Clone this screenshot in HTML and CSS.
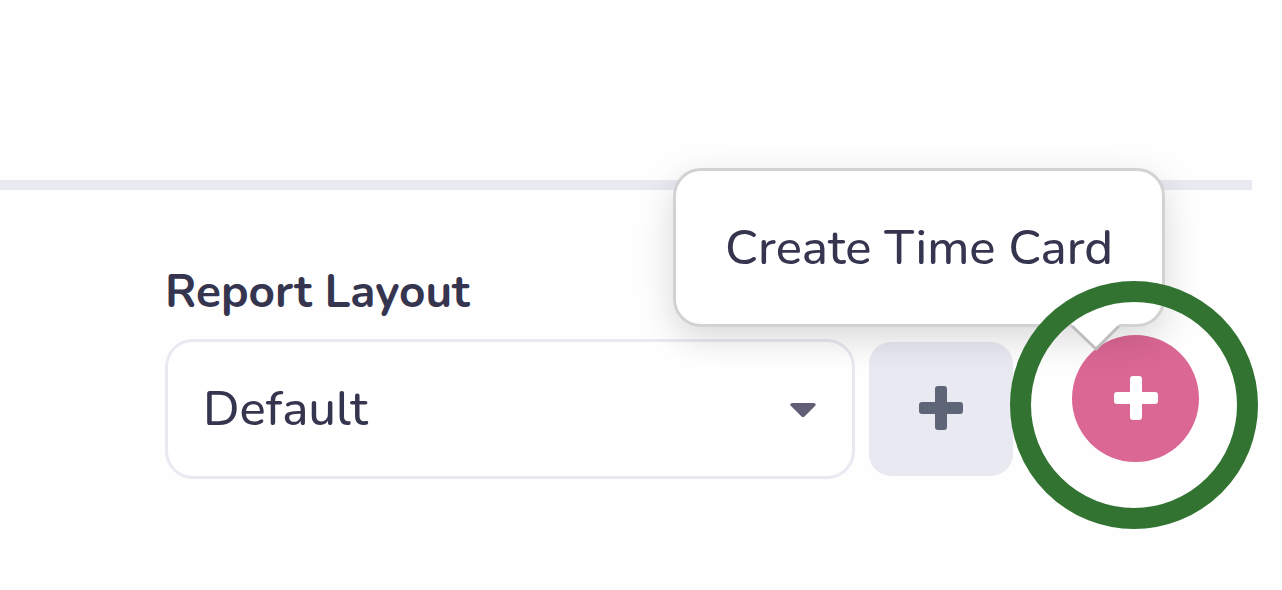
FILE: index.html
```html
<!DOCTYPE html>
<html lang="en">
<head>
<meta charset="utf-8">
<meta name="viewport" content="width=device-width, initial-scale=1">
<title>Report Layout</title>
<link rel="stylesheet" href="styles.css">
</head>
<body>
<main class="panel">
  <hr class="divider">
  <form class="report">
    <label class="report-label" for="layout">Report Layout</label>
    <div class="toolbar">
      <div class="select-box">
        <select class="select" id="layout">
          <option>Default</option>
        </select>
        <svg class="caret" viewBox="0 0 26 16" aria-hidden="true"><path d="M2 1H24Q27 2 25 4L14.500 14.500Q13 16 11.500 14.500L1 4Q-1 2 2 1Z"/></svg>
      </div>
      <button class="add-layout" type="button" aria-label="Add layout">
        <svg class="plus" viewBox="0 0 44 44" aria-hidden="true"><path d="M19 0H25Q28 0 28 3V16H41Q44 16 44 19V25Q44 28 41 28H28V41Q28 44 25 44H19Q16 44 16 41V28H3Q0 28 0 25V19Q0 16 3 16H16V3Q16 0 19 0Z"/></svg>
      </button>
      <div class="create">
        <button class="create-button" type="button" aria-describedby="create-tip" aria-label="Create">
          <svg class="plus" viewBox="0 0 44 44" aria-hidden="true"><path d="M19 0H25Q28 0 28 3V16H41Q44 16 44 19V25Q44 28 41 28H28V41Q28 44 25 44H19Q16 44 16 41V28H3Q0 28 0 25V19Q0 16 3 16H16V3Q16 0 19 0Z"/></svg>
        </button>
        <div class="tooltip" id="create-tip" role="tooltip">Create Time Card
          <svg class="tooltip-arrow" viewBox="0 0 50 28" aria-hidden="true"><path class="arrow-fill" d="M1 0H48V2L25 25L1 2Z"/><path class="arrow-line" d="M1 2L25 25L48 2"/></svg>
        </div>
        <span class="highlight-ring"></span>
      </div>
    </div>
  </form>
</main>
</body>
</html>
```
FILE: styles.css
```css
* {
  box-sizing: border-box;
}

body {
  margin: 0;
  background: #fefefe;
  color: #36354f;
  font-family: Nunito, Lato, "Open Sans", sans-serif;
}

.panel {
  min-height: 100vh;
  padding: 180px 0 48px;
}

.divider {
  height: 10px;
  margin: 0 30px 0 0;
  border: 0;
  background: #e9e9f2;
}

.report {
  padding: 74px 83px 0 165px;
}

.report-label {
  display: block;
  margin-bottom: 15px;
  font-size: 46px;
  font-weight: 700;
  line-height: 56px;
}

.toolbar {
  display: flex;
  align-items: center;
}

.select-box {
  position: relative;
  flex: 1;
  min-width: 0;
}

.select {
  display: block;
  width: 100%;
  height: 140px;
  padding: 0 80px 2px 35px;
  border: 3px solid #e9e9f2;
  border-radius: 28px;
  appearance: none;
  background: #fff;
  color: inherit;
  font: inherit;
  font-size: 49px;
  font-weight: 500;
}

.caret {
  position: absolute;
  top: 63px;
  right: 39px;
  width: 26px;
  height: 16px;
  fill: #605f76;
  pointer-events: none;
}

.add-layout,
.create-button {
  display: flex;
  align-items: center;
  justify-content: center;
  padding: 0 0 2px;
  border: 0;
}

.add-layout {
  width: 144px;
  height: 134px;
  margin-left: 14px;
  border-radius: 22px;
  background: #e9e9f2;
  color: #5d6577;
}

.plus {
  width: 44px;
  height: 44px;
  fill: currentColor;
}

.create {
  position: relative;
  margin: 0 0 21px 59px;
}

.create-button {
  width: 127px;
  height: 127px;
  border-radius: 50%;
  background: #db6794;
  color: #fff;
}

.tooltip {
  position: absolute;
  right: 34px;
  bottom: calc(100% + 8px);
  padding: 48px 49px 47px;
  border: 3px solid #d2d2d2;
  border-radius: 28px;
  background: #fff;
  box-shadow: 0 12px 36px rgba(0, 0, 0, 0.15);
  font-size: 49px;
  font-weight: 500;
  line-height: 58px;
  white-space: nowrap;
}

.tooltip-arrow {
  position: absolute;
  top: 100%;
  right: 41px;
  width: 50px;
  height: 28px;
}

.arrow-fill {
  fill: #fff;
}

.arrow-line {
  fill: none;
  stroke: #bdbdbd;
  stroke-width: 3;
}

.highlight-ring {
  position: absolute;
  top: -54px;
  left: -62px;
  width: 248px;
  height: 248px;
  border: 21px solid #327332;
  border-radius: 50%;
  pointer-events: none;
}
```
